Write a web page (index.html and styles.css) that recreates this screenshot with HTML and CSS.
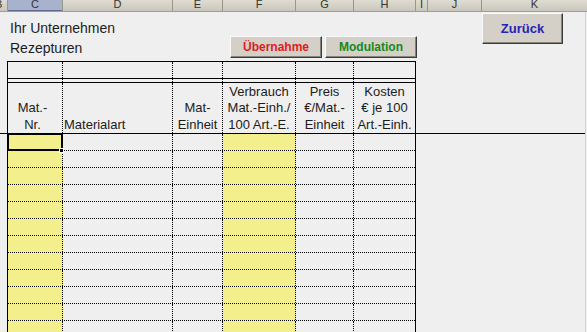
FILE: index.html
```html
<!DOCTYPE html>
<html lang="de">
<head>
<meta charset="utf-8">
<title>Rezepturen</title>
<link rel="stylesheet" href="styles.css">
</head>
<body>
<div class="colhdr">
  <div class="ch chb"><span>B</span></div>
  <div class="ch chsel"><span>C</span></div>
  <div class="ch"><span>D</span></div>
  <div class="ch"><span>E</span></div>
  <div class="ch"><span>F</span></div>
  <div class="ch"><span>G</span></div>
  <div class="ch"><span>H</span></div>
  <div class="ch"><span>I</span></div>
  <div class="ch"><span>J</span></div>
  <div class="ch"><span>K</span></div>
</div>
<div class="sheet">
  <div class="top">
    <div class="title">Ihr Unternehmen<br>Rezepturen</div>
    <div class="btns">
      <div class="btn red">Übernahme</div>
      <div class="btn green">Modulation</div>
    </div>
    <div class="btn back">Zurück</div>
  </div>
  <div class="tbl">
    <div class="row r1"><div></div><div></div><div></div><div></div><div></div><div></div></div>
    <div class="row gap"><div></div><div></div><div></div><div></div><div></div><div></div></div>
    <div class="row hdr">
      <div class="hc shift"><div>Mat.-<br>Nr.</div></div>
      <div class="hc left"><div>Materialart</div></div>
      <div class="hc"><div>Mat-<br>Einheit</div></div>
      <div class="hc"><div>Verbrauch<br>Mat.-Einh./<br>100 Art.-E.</div></div>
      <div class="hc"><div>Preis<br>€/Mat.-<br>Einheit</div></div>
      <div class="hc"><div>Kosten<br>€ je 100<br>Art.-Einh.</div></div>
    </div>
  </div>
  <div class="freeze"></div>
  <div class="tbl data">
    <div class="row"><div class="y"></div><div></div><div></div><div class="y"></div><div></div><div></div></div>
    <div class="row"><div class="y"></div><div></div><div></div><div class="y"></div><div></div><div></div></div>
    <div class="row"><div class="y"></div><div></div><div></div><div class="y"></div><div></div><div></div></div>
    <div class="row"><div class="y"></div><div></div><div></div><div class="y"></div><div></div><div></div></div>
    <div class="row"><div class="y"></div><div></div><div></div><div class="y"></div><div></div><div></div></div>
    <div class="row"><div class="y"></div><div></div><div></div><div class="y"></div><div></div><div></div></div>
    <div class="row"><div class="y"></div><div></div><div></div><div class="y"></div><div></div><div></div></div>
    <div class="row"><div class="y"></div><div></div><div></div><div class="y"></div><div></div><div></div></div>
    <div class="row"><div class="y"></div><div></div><div></div><div class="y"></div><div></div><div></div></div>
    <div class="row"><div class="y"></div><div></div><div></div><div class="y"></div><div></div><div></div></div>
    <div class="row"><div class="y"></div><div></div><div></div><div class="y"></div><div></div><div></div></div>
    <div class="row"><div class="y"></div><div></div><div></div><div class="y"></div><div></div><div></div></div>
    <div class="cursor"><div class="handle"></div></div>
  </div>
</div>
</body>
</html>
```
FILE: styles.css
```css
* { box-sizing: border-box; }
html, body { margin: 0; }
body {
  background: #efefef;
  font-family: "Liberation Sans", Arial, sans-serif;
  color: #151515;
  width: 587px;
  height: 332px;
  overflow: hidden;
}
.colhdr {
  display: grid;
  grid-template-columns: 8px 55px 110px 50px 73px 58px 62px 12px 54px 1fr;
  height: 12px;
  background: linear-gradient(#dfdcd3, #cac6bb);
  border-bottom: 1px solid #a29e92;
}
.ch {
  border-right: 1px solid #9a968a;
  overflow: hidden;
  text-align: center;
  font-size: 11px;
  line-height: 11px;
  color: #333;
}
.ch span { display: block; margin-top: -1px; }
.chb { text-align: left; }
.chb span { margin-left: -5px; }
.chsel { background: #a9b2cc; box-shadow: inset 0 -1px #5d6a92; }
.ch:last-child { border-right: 0; }

.sheet {
  position: relative;
  width: 586px;
  height: 320px;
  border-right: 1px solid #d2d2d2;
}
.top { display: flex; height: 49px; }
.title {
  width: 230px;
  padding: 6px 0 0 10px;
  font-size: 14px;
  line-height: 20px;
  color: #1c1c1c;
}
.btns {
  display: flex;
  gap: 3px;
  align-self: flex-end;
  margin-bottom: 3px;
}
.btn {
  width: 92px;
  height: 22px;
  background: #d4d0c8;
  border: 1px solid;
  border-color: #fafafa #3c3c3c #3c3c3c #fafafa;
  box-shadow: inset -1px -1px #85827a;
  font-weight: bold;
  font-size: 12px;
  display: flex;
  align-items: center;
  justify-content: center;
}
.red { color: #e01b1f; }
.green { color: #16891c; }
.back {
  align-self: flex-start;
  margin: 1px 0 0 65px;
  width: 81px;
  height: 31px;
  font-size: 13px;
  color: #2424b4;
}

.tbl {
  margin-left: 7px;
  width: 409px;
  border-left: 1px solid #000;
  border-right: 1px solid #000;
}
.row {
  display: grid;
  grid-template-columns: 55px 110px 50px 73px 58px 61px;
}
.row > div { border-right: 1px dotted #000; }
.row > div:last-child { border-right: 0; }
.r1 { height: 18px; border-top: 1px solid #000; border-bottom: 1px solid #000; }
.gap { height: 3px; }
.hdr {
  height: 51px;
  border-top: 1px solid #000;
  font-size: 13px;
  line-height: 16.5px;
  color: #1c1c1c;
}
.hc {
  display: flex;
  flex-direction: column;
  justify-content: flex-end;
  text-align: center;
}
.hc.left { text-align: left; padding-left: 1px; }
.hc.shift { padding-right: 5px; }
.freeze { height: 1px; background: #000; }
.data { position: relative; }
.data .row { height: 17px; border-bottom: 1px dotted #000; }
.y { background: #f3ef8d; }
.cursor {
  position: absolute;
  left: -1px;
  top: -1px;
  width: 56px;
  height: 18px;
  border: 2px solid #000;
}
.handle {
  position: absolute;
  right: -3px;
  bottom: -4px;
  width: 5px;
  height: 5px;
  background: #000;
  border: 1px solid #fff;
}
```
